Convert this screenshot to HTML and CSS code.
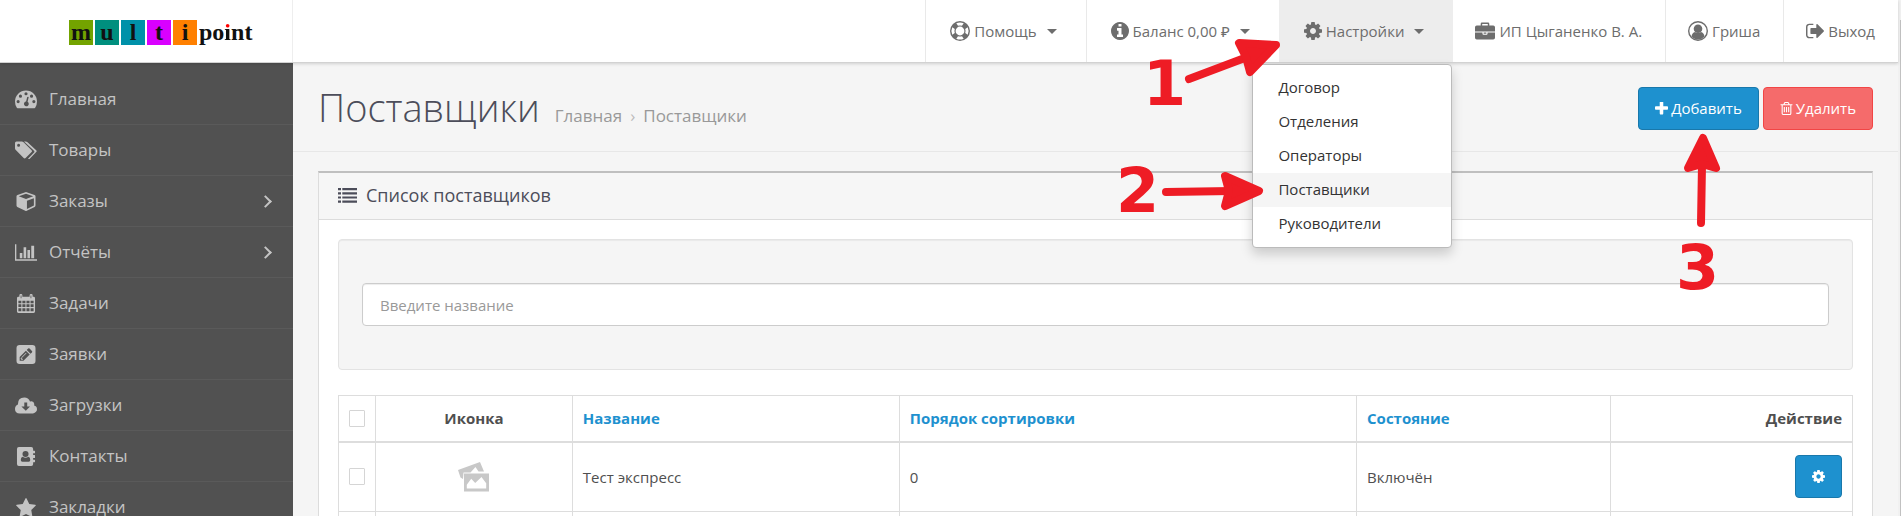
FILE: index.html
```html
<!DOCTYPE html>
<html lang="ru">
<head>
<meta charset="utf-8">
<title>Поставщики</title>
<link rel="stylesheet" href="styles.css">
</head>
<body>
<svg class="sprite" aria-hidden="true">
  <symbol id="cog" viewBox="128 128 1536 1536"><path d="M1152 896q0-106-75-181t-181-75-181 75-75 181 75 181 181 75 181-75 75-181zm512-109v222q0 12-8 23t-20 13l-185 28q-19 54-39 91 35 50 107 138 10 12 10 25t-9 23q-27 37-99 108t-94 71q-12 0-26-9l-138-108q-44 23-91 38-16 136-29 186-7 28-36 28h-222q-14 0-24.500-8.500t-11.500-21.500l-28-184q-49-16-90-37l-141 107q-10 9-25 9-14 0-25-11-126-114-165-168-7-10-7-23 0-12 8-23 15-21 51-66.500t54-70.500q-27-50-41-99l-183-27q-13-2-21-12.500t-8-23.500v-222q0-12 8-23t19-13l186-28q14-46 39-92-40-57-107-138-10-12-10-24 0-10 9-23 26-36 98.500-107.500t94.500-71.500q13 0 26 10l138 107q44-23 91-38 16-136 29-186 7-28 36-28h222q14 0 24.500 8.500t11.500 21.500l28 184q49 16 90 37l142-107q9-9 24-9 13 0 25 10 129 119 165 170 7 8 7 22 0 12-8 23-15 21-51 66.500t-54 70.500q26 50 41 98l183 28q13 2 21 12.500t8 23.500z"/></symbol>
  <symbol id="info" viewBox="128 128 1536 1536"><path d="M1152 1376v-160q0-14-9-23t-23-9h-96v-512q0-14-9-23t-23-9h-320q-14 0-23 9t-9 23v160q0 14 9 23t23 9h96v320h-96q-14 0-23 9t-9 23v160q0 14 9 23t23 9h448q14 0 23-9t9-23zm-128-896v-160q0-14-9-23t-23-9h-192q-14 0-23 9t-9 23v160q0 14 9 23t23 9h192q14 0 23-9t9-23zm640 416q0 209-103 385.500t-279.500 279.500-385.500 103-385.500-103-279.500-279.500-103-385.500 103-385.500 279.500-279.500 385.500-103 385.500 103 279.500 279.500 103 385.500z"/></symbol>
  <symbol id="plus" viewBox="192 192 1408 1408"><path d="M1600 736v192q0 40-28 68t-68 28h-416v416q0 40-28 68t-68 28h-192q-40 0-68-28t-28-68v-416h-416q-40 0-68-28t-28-68v-192q0-40 28-68t68-28h416v-416q0-40 28-68t68-28h192q40 0 68 28t28 68v416h416q40 0 68 28t28 68z"/></symbol>
  <symbol id="trash" viewBox="192 128 1408 1536"><path d="M704 736v576q0 14-9 23t-23 9h-64q-14 0-23-9t-9-23v-576q0-14 9-23t23-9h64q14 0 23 9t9 23zm256 0v576q0 14-9 23t-23 9h-64q-14 0-23-9t-9-23v-576q0-14 9-23t23-9h64q14 0 23 9t9 23zm256 0v576q0 14-9 23t-23 9h-64q-14 0-23-9t-9-23v-576q0-14 9-23t23-9h64q14 0 23 9t9 23zm128 724v-948h-896v948q0 22 7 40.500t14.500 27 10.500 8.500h832q3 0 10.500-8.500t14.500-27 7-40.500zm-672-1076h448l-48-117q-7-9-17-11h-317q-10 2-17 11zm928 32v64q0 14-9 23t-23 9h-96v948q0 83-47 143.500t-113 60.500h-832q-66 0-113-58.500t-47-141.500v-952h-96q-14 0-23-9t-9-23v-64q0-14 9-23t23-9h309l70-167q15-37 54-63t79-26h320q40 0 79 26t54 63l70 167h309q14 0 23 9t9 23z"/></symbol>
  <symbol id="star" viewBox="64 32 1664 1600"><path d="M1728 647q0 22-26 48l-363 354 86 500q1 7 1 20 0 21-10.500 35.500t-30.500 14.500q-19 0-40-12l-449-236-449 236q-22 12-40 12-21 0-31.500-14.500t-10.500-35.500q0-6 2-20l86-500-364-354q-25-27-25-48 0-37 56-46l502-73 225-455q19-41 49-41t49 41l225 455 502 73q56 9 56 46z"/></symbol>
  <symbol id="exit" viewBox="64 192 1568 1408"><path d="M704 1440q0 4 1 20t.5 26.500-3 23.500-10 19.500-20.500 6.500h-320q-119 0-203.500-84.500t-84.500-203.500v-704q0-119 84.500-203.500t203.500-84.500h320q13 0 22.500 9.500t9.500 22.500q0 4 1 20t.5 26.500-3 23.500-10 19.500-20.500 6.500h-320q-66 0-113 47t-47 113v704q0 66 47 113t113 47h312l11.500 1 11.500 3 8 5.500 7 9 2 13.500zm928-544q0 26-19 45l-544 544q-19 19-45 19t-45-19-19-45v-288h-448q-26 0-45-19t-19-45v-384q0-26 19-45t45-19h448v-288q0-26 19-45t45-19 45 19l544 544q19 19 19 45z"/></symbol>
  <symbol id="ring" viewBox="0 0 20 20"><path fill-rule="evenodd" d="M10 0a10 10 0 1 0 0 20a10 10 0 0 0 0-20zM10 5.600a4.400 4.400 0 1 1 0 8.800a4.400 4.400 0 0 1 0-8.800zM6.300 2.300a8.500 8.500 0 0 1 7.400 0l-1.700 2.500a5.600 5.600 0 0 0-4 0zM6.300 17.700a8.500 8.500 0 0 0 7.400 0l-1.700-2.500a5.600 5.600 0 0 1-4 0zM2.300 6.300a8.500 8.500 0 0 0 0 7.400l2.500-1.700a5.600 5.600 0 0 1 0-4zM17.700 6.300a8.500 8.500 0 0 1 0 7.400l-2.500-1.700a5.600 5.600 0 0 0 0-4z"/></symbol>
  <symbol id="case" viewBox="0 0 20 17"><path fill-rule="evenodd" d="M5.700 3V1.200Q5.700 0 6.900 0h6.200q1.200 0 1.200 1.200V3h3.900Q20 3 20 4.800V9H0V4.800Q0 3 1.800 3zM7.200 3h5.600V1.500H7.200zM0 10h7.500v1.300q0 .9.900.9h3.200q.9 0 .9-.9V10H20v5.300q0 1.700-1.800 1.700H1.800Q0 17 0 15.300zM8.600 10h2.800v1.200H8.600z"/></symbol>
  <symbol id="user" viewBox="0 0 20 20"><circle cx="10" cy="10" r="9.300" fill="none" stroke="currentColor" stroke-width="1.400"/><circle cx="10" cy="7.800" r="4.300"/><path d="M3.500 15.500q.6-4 3.500-4.500q3 2.200 6 0q2.900.5 3.500 4.500q-2.600 3.100-6.500 3.100t-6.500-3.100z"/></symbol>
  <symbol id="dash" viewBox="0 0 21 17"><path fill-rule="evenodd" d="M0 10.500a10.500 10.500 0 0 1 21 0q0 3-1.600 5.700-.3.600-.9.600h-16q-.6 0-.9-.6Q0 13.500 0 10.500zM3 9a1.500 1.500 0 1 0 0 3a1.500 1.500 0 0 0 0-3zM5.200 3.800a1.500 1.500 0 1 0 0 3a1.500 1.500 0 0 0 0-3zM10.500 1.500a1.500 1.500 0 1 0 0 3a1.500 1.500 0 0 0 0-3zM15.800 3.800a1.500 1.500 0 1 0 0 3a1.500 1.500 0 0 0 0-3zM18 9a1.500 1.500 0 1 0 0 3a1.500 1.500 0 0 0 0-3zM11.600 6.300l-1 4.100a2.300 2.300 0 1 0 1.400.3l1-4q.100-.8-.5-.9t-.9.500z"/></symbol>
  <symbol id="tags" viewBox="0 0 22 18"><path fill-rule="evenodd" d="M0 1.500Q0 0 1.500 0h5.300q1 0 1.800.8l8 7.900q.9.900 0 1.900l-6 6q-.9.900-1.900 0l-7.900-8Q0 7.800 0 6.800zM3.600 2.200a1.500 1.500 0 1 0 0 3a1.500 1.500 0 0 0 0-3z"/><path d="M9 0h1.600q1.100 0 1.900.8l8.700 7.900q.9.900 0 1.900l-6.200 6.300q-.9.900-2 .3l6-6.100q.9-1 0-1.900z"/></symbol>
  <symbol id="cube" viewBox="0 0 20 20"><path fill-rule="evenodd" d="M9.300.2q.7-.3 1.400 0l8.300 2.900q1 .4 1 1.500v9.600q0 1-.9 1.500l-8.300 4.100q-.8.400-1.600 0l-8.300-4.100Q0 15.200 0 14.200V4.600q0-1.100 1-1.500zM10 1.900L2.400 4.600L10 7.400l7.600-2.800zM18.300 6.500L11 9.200v8.600l7.300-3.600z"/></symbol>
  <symbol id="chart" viewBox="0 0 23 17"><path d="M0 0h1.400v15.600H23V17H0zM5 9h2.700v5.500H5zM9 3h2.700v11.500H9zM13 6h2.700v8.500H13zM17 1.500h3v13h-3z"/></symbol>
  <symbol id="cal" viewBox="0 0 19 20"><path fill-rule="evenodd" d="M2.500 3V1.500Q2.500 0 3.900 0h.4q1.400 0 1.400 1.500V3h7.600V1.500q0-1.500 1.400-1.500h.4q1.400 0 1.400 1.500V3h1q1.500 0 1.500 1.500v14q0 1.500-1.500 1.500h-16Q0 20 0 18.500v-14Q0 3 1.500 3zM1.500 7v2.800h3.100V7zM5.700 7v2.800h3.200V7zM10 7v2.800h3.200V7zM14.300 7v2.800h3.200V7zM1.500 10.900v2.800h3.100v-2.800zM5.700 10.900v2.800h3.200v-2.800zM10 10.900v2.800h3.200v-2.800zM14.300 10.900v2.800h3.200v-2.800zM1.500 14.900v3.200h3.100v-3.200zM5.700 14.900v3.200h3.200v-3.200zM10 14.900v3.200h3.200v-3.200zM14.300 14.900v3.200h3.200v-3.200zM3.900 1.500v3h.8v-3zM14.300 1.500v3h.8v-3z"/></symbol>
  <symbol id="edit" viewBox="0 0 18 18"><path fill-rule="evenodd" d="M3 0h12q3 0 3 3v12q0 3-3 3H3q-3 0-3-3V3q0-3 3-3zM3 15h3.600l5.900-5.900-3.600-3.600L3 11.400zM9.700 4.700l3.600 3.600 1.300-1.300q.7-.7 0-1.400l-2.200-2.200q-.7-.7-1.400 0zM4.500 11.900l4.500-4.500.5.500L5 12.400zM4 12.300h1v.8h.8v1h-.7l-1.100-1z"/></symbol>
  <symbol id="cloud" viewBox="0 0 22 16"><path fill-rule="evenodd" d="M4.800 16Q0 15.700 0 11.400q0-3.100 2.900-4.500Q2.800 0 9.300 0q4.200 0 5.700 4q3.700-1.200 4.300 2.500l-.2 1.500Q22 8.700 22 11.700T18 16zM9.300 5v4H6.400l4.400 4.300L15 9h-2.800V5z"/></symbol>
  <symbol id="book" viewBox="0 0 19 20"><path fill-rule="evenodd" d="M2 0h13q2 0 2 2v2h1.500q.5 0 .5.500v1.700q0 .5-.5.500H17v1.600h1.500q.5 0 .5.500v2.400q0 .5-.5.500H17v1.600h1.500q.5 0 .5.500v1.700q0 .5-.5.500H17v2q0 2-2 2H2q-2 0-2-2V2Q0 0 2 0zM9 4.200a3.200 3.200 0 1 0 0 6.400a3.200 3.200 0 0 0 0-6.400zM6 10.200q-2 .4-2 3.600q0 1.700 1.600 1.700h6.800q1.600 0 1.600-1.700q0-3.200-2-3.600q-3 2.300-6 0z"/></symbol>
  <symbol id="list" viewBox="0 0 19 15"><path d="M0 0h3v2.200H0zM4.300 0H19v2.200H4.300zM0 4.200h3v2.200H0zM4.300 4.200H19v2.200H4.300zM0 8.400h3v2.200H0zM4.300 8.400H19v2.200H4.300zM0 12.600h3v2.200H0zM4.300 12.600H19v2.200H4.300z"/></symbol>
  <symbol id="photo" viewBox="0 0 32 30"><path fill-rule="evenodd" d="M0 8L22 0l4 9.500h-5.500L17.500 5l-5 5.500H5.500L5 17l-2.500-1.500z"/><path fill-rule="evenodd" d="M6 11.500h25v18H6zM8.800 26.500h19.400v-5.200l-4.700-6.300-6.300 6-4-4.300-4.400 6z"/></symbol>
</svg>

<header class="topbar">
  <a class="brand" href="#" aria-label="multipoint">
    <span class="tile green">m</span><span class="tile teal">u</span><span class="tile blue">l</span><span class="tile pink">t</span><span class="tile orange">i</span><span class="rest">po<span class="dot">i</span>nt</span>
  </a>
  <nav class="tools">
    <a class="tool menu" href="#"><svg class="ic20"><use href="#ring"/></svg>Помощь<span class="caret"></span></a>
    <a class="tool menu" href="#"><svg class="ic18"><use href="#info"/></svg>Баланс 0,00 ₽<span class="caret"></span></a>
    <div class="holder">
      <a class="tool menu open" href="#"><svg class="ic18"><use href="#cog"/></svg>Настройки<span class="caret"></span></a>
      <ul class="dropdown">
        <li><a href="#">Договор</a></li>
        <li><a href="#">Отделения</a></li>
        <li><a href="#">Операторы</a></li>
        <li><a class="current" href="#">Поставщики</a></li>
        <li><a href="#">Руководители</a></li>
      </ul>
    </div>
    <a class="tool plain" href="#"><svg class="ic20"><use href="#case"/></svg>ИП Цыганенко В. А.</a>
    <a class="tool" href="#"><svg class="ic20"><use href="#user"/></svg>Гриша</a>
    <a class="tool" href="#"><svg class="ic18"><use href="#exit"/></svg>Выход</a>
  </nav>
</header>

<div class="layout">
  <nav class="side">
    <a href="#"><svg><use href="#dash"/></svg>Главная</a>
    <a href="#"><svg><use href="#tags"/></svg>Товары</a>
    <a class="more" href="#"><svg><use href="#cube"/></svg>Заказы</a>
    <a class="more" href="#"><svg><use href="#chart"/></svg>Отчёты</a>
    <a href="#"><svg><use href="#cal"/></svg>Задачи</a>
    <a href="#"><svg><use href="#edit"/></svg>Заявки</a>
    <a href="#"><svg><use href="#cloud"/></svg>Загрузки</a>
    <a href="#"><svg><use href="#book"/></svg>Контакты</a>
    <a href="#"><svg><use href="#star"/></svg>Закладки</a>
  </nav>

  <main class="content">
    <div class="pagehead">
      <div class="titles">
        <h1>Поставщики</h1>
        <div class="crumbs"><a href="#">Главная</a><span class="sep">›</span><a href="#">Поставщики</a></div>
      </div>
      <div class="actions">
        <button class="btn add" type="button"><svg><use href="#plus"/></svg>Добавить</button>
        <button class="btn del" type="button"><svg><use href="#trash"/></svg>Удалить</button>
      </div>
    </div>

    <section class="panel">
      <h2><svg><use href="#list"/></svg>Список поставщиков</h2>
      <div class="inner">
        <form class="well"><input type="text" placeholder="Введите название" aria-label="Введите название"></form>
        <table>
          <colgroup><col class="c1"><col class="c2"><col class="c3"><col class="c4"><col class="c5"><col class="c6"></colgroup>
          <thead>
            <tr><th><input type="checkbox" aria-label="Выбрать все"></th><th class="mid">Иконка</th><th><a href="#">Название</a></th><th><a href="#">Порядок сортировки</a></th><th><a href="#">Состояние</a></th><th class="end">Действие</th></tr>
          </thead>
          <tbody>
            <tr><td><input type="checkbox" aria-label="Выбрать Тест экспресс"></td><td class="mid"><svg class="thumb"><use href="#photo"/></svg></td><td>Тест экспресс</td><td>0</td><td>Включён</td><td class="end"><button class="btn add gear" type="button" aria-label="Действие"><svg><use href="#cog"/></svg></button></td></tr>
            <tr><td><input type="checkbox" aria-label="Выбрать"></td><td></td><td></td><td></td><td></td><td></td></tr>
          </tbody>
        </table>
      </div>
    </section>
  </main>
</div>
<div class="scrolltrack"></div>

<svg class="marks" viewBox="0 0 1901 320">
  <g class="num"><text x="1143" y="105">1</text><text x="1116" y="212">2</text><text x="1676" y="289">3</text></g>
  <g class="shaft"><path d="M1189 79L1250 56"/><path d="M1166 192L1232 191"/><path d="M1701 223L1702 165"/></g>
  <g class="head"><path d="M1239 43L1276 45L1250 72L1246 57z"/><path d="M1225 176L1259 191L1225 206L1229 191z"/><path d="M1703 138L1716 168L1702 164L1688 168z"/></g>
</svg>
</body>
</html>
```
FILE: styles.css
```css
* { box-sizing: border-box; }
body {
  margin: 0;
  height: 100vh;
  overflow: hidden;
  padding-right: 3px;
  background: #f5f5f5;
  color: #4c4d5a;
  font: 15px/22px "Open Sans", "Noto Sans", sans-serif;
  display: flex;
  flex-direction: column;
}
a { color: inherit; text-decoration: none; }
svg { fill: currentColor; flex: none; }
.sprite { position: absolute; width: 0; height: 0; }

.topbar {
  position: relative;
  z-index: 2;
  flex: none;
  display: flex;
  justify-content: space-between;
  height: 63px;
  background: #fff;
  border-bottom: 1px solid #d2d2d2;
  box-shadow: 0 1px 3px rgba(0, 0, 0, .15);
}
.brand {
  width: 293px;
  border-right: 1px solid #eee;
  display: flex;
  align-items: flex-start;
  gap: 2px;
  padding: 20px 0 0 69px;
  color: #111;
  font: bold 24px/24px "Liberation Serif", serif;
}
.tile { width: 24px; height: 25px; text-align: center; }
.green { background: #73a300; }
.teal { background: #008f7e; }
.blue { background: #0091a9; }
.pink { background: #d900ff; }
.orange { background: #ff8000; }
.dot { background: linear-gradient(#f00 9px, #111 9px); background-clip: text; color: transparent; }

.tools { display: flex; }
.tool {
  display: flex;
  align-items: center;
  height: 62px;
  padding: 0 23px 0 22px;
  border-left: 1px solid #e9e9e9;
  color: #6d6d6d;
  white-space: nowrap;
}
.tool svg { margin-right: 4px; }
.menu { padding: 0 29px 0 24px; }
.plain { border-left: 0; }
.open { background: #ededed; border-color: #ededed; }
.ic20 { width: 20px; height: 20px; }
.ic18 { width: 18px; height: 18px; }
.caret { margin-left: 10px; border: 5px solid transparent; border-top-color: currentColor; border-bottom: 0; }
.holder { position: relative; }
.dropdown {
  position: absolute;
  top: 64px;
  right: 1px;
  width: 200px;
  margin: 0;
  padding: 6px 0;
  list-style: none;
  background: #fff;
  border: 1px solid #bbb;
  border-radius: 4px;
  box-shadow: 0 6px 12px rgba(0, 0, 0, .175);
}
.dropdown a { display: block; padding: 5px 25px 7px; color: #333; }
.dropdown .current { background: #f5f5f5; }

.layout { flex: 1; display: flex; min-height: 0; }
.side {
  flex: none;
  width: 293px;
  padding-top: 11px;
  background: #515151;
  color: #c4c4c4;
  font-size: 17px;
  overflow: hidden;
}
.side a {
  display: flex;
  align-items: center;
  gap: 12px;
  height: 51px;
  padding: 0 23px 0 15px;
  border-bottom: 1px solid #5a5a5a;
}
.side svg { width: 22px; height: 19px; }
.more::after {
  content: "";
  width: 7px;
  height: 7px;
  margin-left: auto;
  border: solid currentColor;
  border-width: 2px 2px 0 0;
  transform: rotate(45deg);
}

.content { flex: 1; min-width: 0; overflow: hidden; }
.pagehead {
  display: flex;
  justify-content: space-between;
  align-items: center;
  height: 89px;
  padding: 0 25px;
  border-bottom: 1px solid #e7e7e7;
}
.titles { display: flex; align-items: baseline; gap: 15px; }
h1 { margin: 0; font-size: 38px; font-weight: 300; line-height: 48px; }
.crumbs { display: flex; gap: 8px; color: #999; font-size: 17px; }
.sep { color: #bbb; }
.actions { display: flex; gap: 4px; padding-top: 2px; }
.btn {
  display: inline-flex;
  align-items: center;
  justify-content: center;
  gap: 3px;
  height: 43px;
  padding: 0 16px;
  border: 1px solid;
  border-radius: 4px;
  color: #fff;
  font: 500 15px/22px "Open Sans", "Noto Sans", sans-serif;
}
.btn svg { width: 13px; height: 13px; }
.add { background: #1e91cf; border-color: #1978ab; }
.del { background: #f56b6b; border-color: #f24545; }

.panel { margin: 19px 25px 0; background: #fff; border: 1px solid #dcdcdc; border-top: 2px solid #bfbfbf; }
h2 {
  display: flex;
  align-items: center;
  gap: 9px;
  margin: 0;
  height: 47px;
  padding: 0 19px 2px;
  background: #f6f6f6;
  border-bottom: 1px solid #dcdcdc;
  font-size: 18px;
  font-weight: 400;
}
h2 svg { width: 19px; height: 15px; }
.inner { padding: 19px; }
.well {
  height: 131px;
  margin-bottom: 25px;
  padding: 43px 23px;
  background: #f5f5f5;
  border: 1px solid #e3e3e3;
  border-radius: 4px;
  box-shadow: inset 0 1px 1px rgba(0, 0, 0, .05);
}
.well input {
  display: block;
  width: 100%;
  height: 43px;
  padding: 0 17px;
  background: #fff;
  border: 1px solid #ccc;
  border-radius: 4px;
  box-shadow: inset 0 1px 1px rgba(0, 0, 0, .075);
  color: #555;
  font: inherit;
}
.well input::placeholder { color: #999; opacity: 1; }

table { width: 100%; table-layout: fixed; border-collapse: collapse; color: #4f4f4f; }
.c1 { width: 37px; }
.c2 { width: 13%; }
.c3 { width: 21.6%; }
.c4 { width: 30.2%; }
.c5 { width: 16.8%; }
th, td { height: 70px; padding: 0 10px; border: 1px solid #ddd; text-align: left; vertical-align: middle; }
th { height: 46px; border-bottom-width: 2px; font-weight: 700; }
th a { color: #1e91cf; }
.mid { text-align: center; }
.end { text-align: right; }
td .btn { vertical-align: middle; }
.gear { width: 47px; padding: 0; }
.thumb { display: block; width: 32px; height: 30px; margin: 0 auto; color: #c8c8c8; }
table input { appearance: none; display: block; width: 16px; height: 17px; margin: 0; border: 1px solid #d5d5d5; border-radius: 1px; background: #fff; }

.scrolltrack { position: absolute; top: 0; right: 0; width: 3px; height: 100%; background: linear-gradient(#c1c1c1, #c1c1c1) right 20px / 1px 100% no-repeat #f1f1f1; }

.marks { position: absolute; z-index: 3; top: 0; left: 0; width: 1901px; height: 320px; color: #ee1c25; pointer-events: none; }
.num { font: bold 62px "DejaVu Sans", sans-serif; }
.shaft { stroke: currentColor; stroke-width: 8; stroke-linecap: round; }
.head { stroke: currentColor; stroke-width: 8; stroke-linejoin: round; }
```
